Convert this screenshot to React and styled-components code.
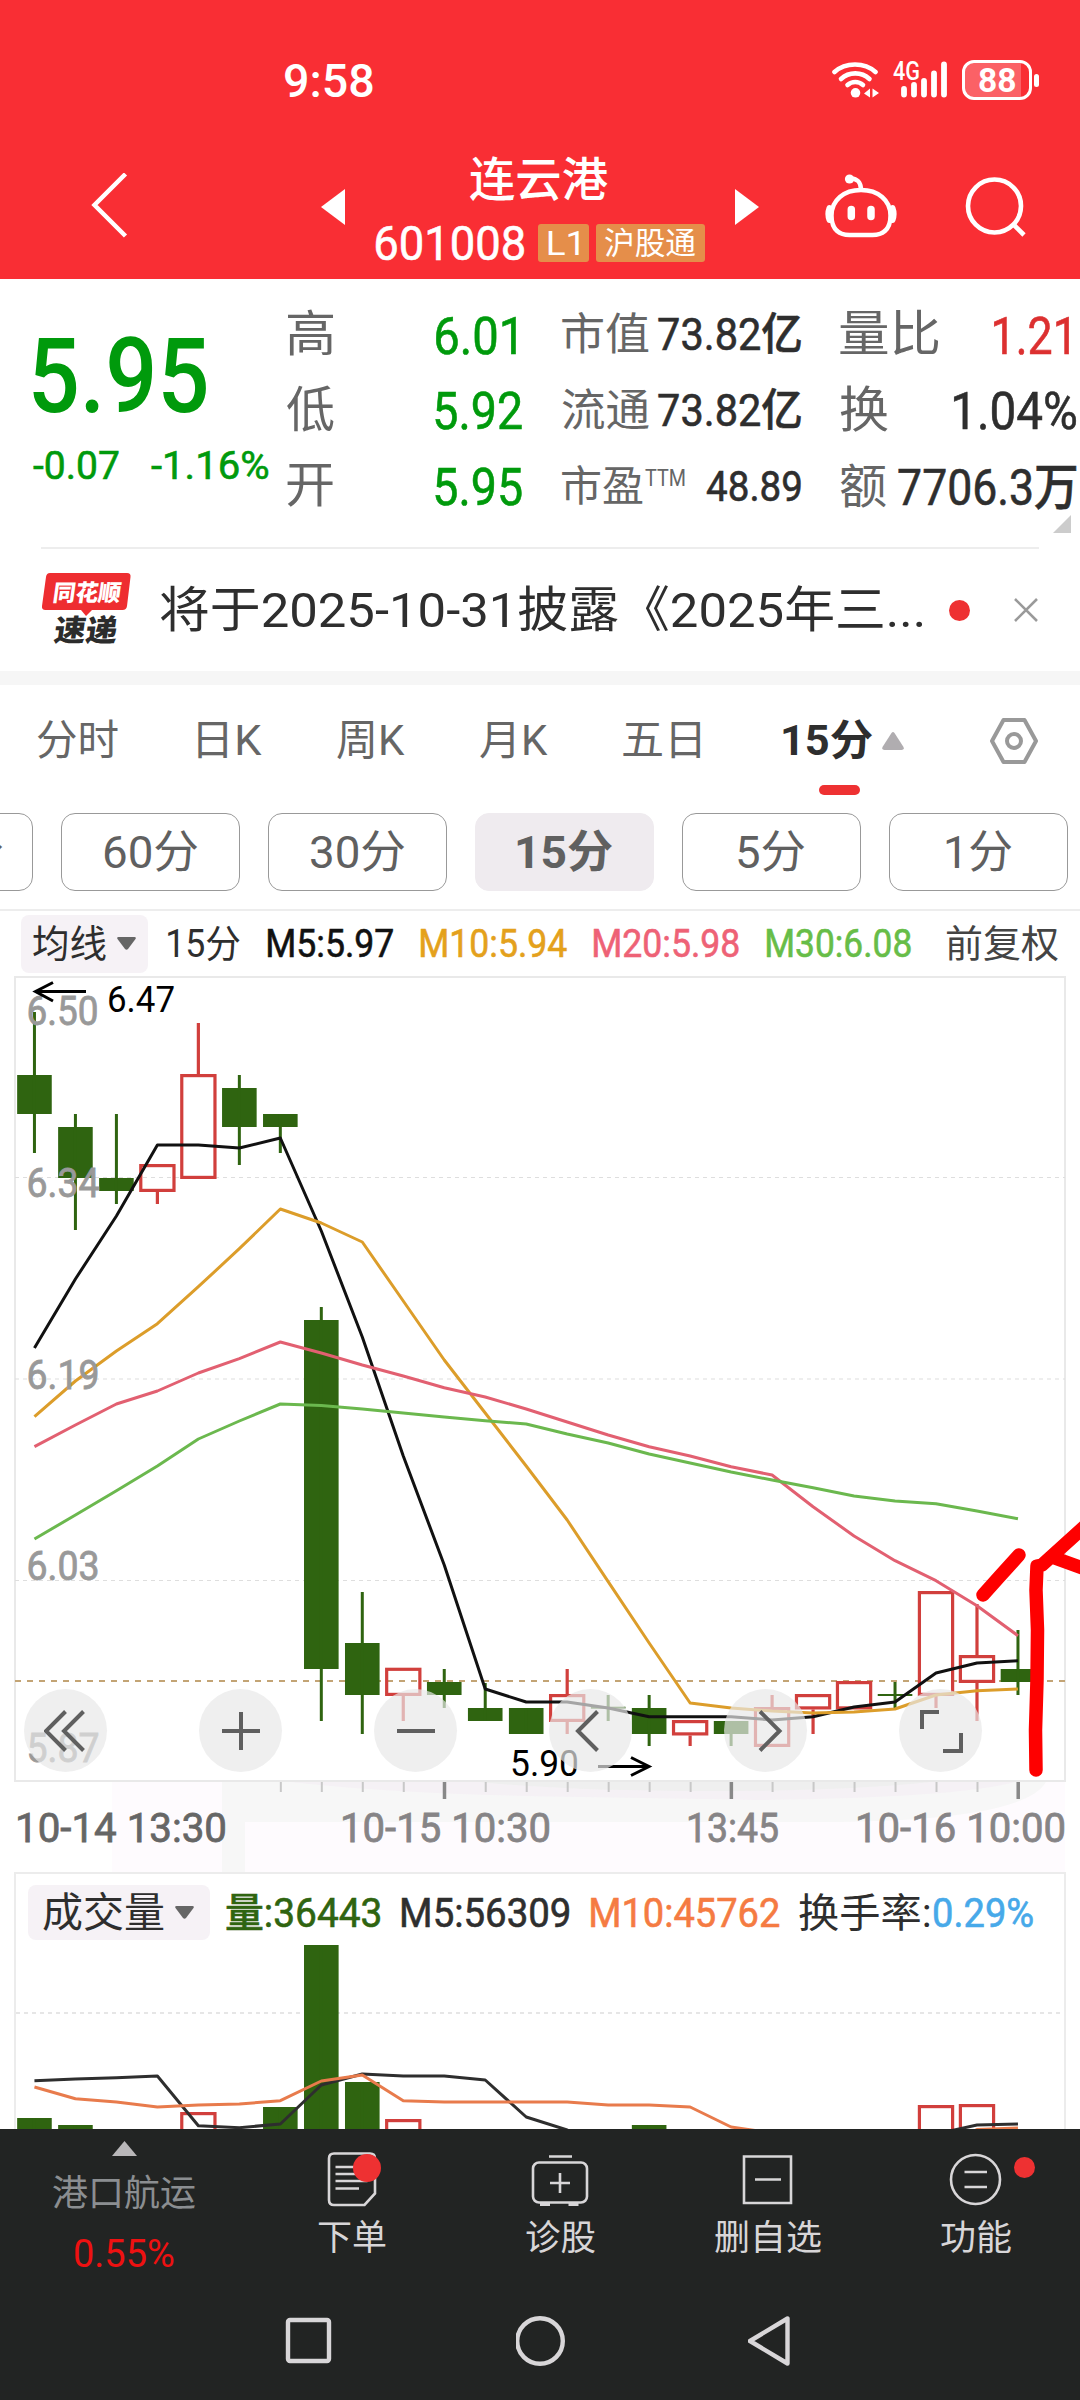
import React, { useLayoutEffect, useRef, useState } from 'react'
import styled, { createGlobalStyle, css } from 'styled-components'

const FONT = 'Roboto, "Noto Sans CJK SC", sans-serif'
const UP = '#d13f3c'
const DOWN = '#2f6410'

const GlobalStyle = createGlobalStyle`
  * { box-sizing: border-box; }
  body {
    margin: 0;
    background: #fff;
    font-family: ${FONT};
    overflow: hidden;
  }
  svg { display: block; flex: none; }
`

const Page = styled.div`
  width: 1080px;
  height: 2400px;
  display: flex;
  flex-direction: column;
  overflow: hidden;
  background: #fff;
`

/* condensed label: the glyphs are squeezed to an exact ink width */
const LabelBox = styled.span`
  display: block;
  flex: none;
  height: ${(p) => p.$size * 1.2}px;
  line-height: ${(p) => p.$size * 1.2}px;
  font-size: ${(p) => p.$size}px;
  font-weight: ${(p) => p.$weight || 400};
  color: ${(p) => p.$color || '#2e2e2e'};
  margin-left: ${(p) => p.$ml || 0}px;
  white-space: pre;
  /* half a step between regular and medium */
  ${(p) => p.$weight === 450 && css`
    -webkit-text-stroke: 0.6px currentColor;
  `}
`

const LabelInner = styled.span`
  display: inline-block;
  transform-origin: 0 50%;
`

function Label({ w, size, weight, color, ml, children }) {
  const ref = useRef(null)
  const [fit, setFit] = useState({ k: 1, dx: 0 })
  useLayoutEffect(() => {
    const ctx = document.createElement('canvas').getContext('2d')
    ctx.font = `${weight || 400} ${size}px ${FONT}`
    const m = ctx.measureText(ref.current.textContent)
    const k = w / (m.actualBoundingBoxLeft + m.actualBoundingBoxRight)
    setFit({ k, dx: m.actualBoundingBoxLeft * k })
  }, [w, size, weight, children])
  return (
    <LabelBox $size={size} $weight={weight} $color={color} $ml={ml} style={{ width: w }}>
      <LabelInner ref={ref} style={{ transform: `translate(${fit.dx}px, ${size * 0.03}px) scaleX(${fit.k})` }}>
        {children}
      </LabelInner>
    </LabelBox>
  )
}

const Gap = styled.div`
  flex: none;
  width: ${(p) => p.$w || 0}px;
  height: ${(p) => p.$h || 0}px;
`

/* ---------- header ---------- */

const Header = styled.header`
  flex: none;
  height: 279px;
  padding-top: 26px;
  background: #f92e34;
`

const StatusBar = styled.div`
  height: 108px;
  display: flex;
  align-items: center;
  padding-left: 285px;
`

const Battery = styled.div`
  width: 70px;
  height: 40px;
  margin-left: 14px;
  padding-bottom: 2px;
  display: flex;
  align-items: center;
  justify-content: center;
  border: 3px solid #fff;
  border-radius: 12px;
  background: linear-gradient(90deg, #fb6166 88%, #f92e34 88%);
`

const BatteryTip = styled.div`
  width: 5px;
  height: 13px;
  margin-left: 2px;
  border-radius: 3px;
  background: #fff;
`

const NavBar = styled.div`
  height: 145px;
  display: flex;
  align-items: center;
`

const StockTitle = styled.div`
  width: 330px;
  height: 145px;
  margin: 0 29px 0 31px;
  padding-top: 13px;
`

const TitleRow = styled.div`
  height: 64px;
  display: flex;
  align-items: center;
  padding-left: ${(p) => p.$pl || 0}px;
`

const Tag = styled.div`
  flex: none;
  width: ${(p) => p.$w}px;
  height: 38px;
  margin-left: ${(p) => p.$ml}px;
  display: flex;
  align-items: center;
  justify-content: center;
  border-radius: 3px;
  background: #e58e4a;
`

function WifiIcon() {
  return (
    <svg width="48" height="38" viewBox="832 60.5 48 38" fill="none" stroke="#fff" strokeWidth="4.6" strokeLinecap="round">
      <path d="M834.5 71.5c11-10 30-10 41 0" />
      <path d="M841 78.5c8-7.500 20.500-7.500 28.500 0" />
      <path d="M847.500 84.500c4.500-4 11-4 15.500 0" />
      <circle cx="855.500" cy="92.300" r="4.800" fill="#fff" stroke="none" />
      <path d="M870 88v9l-6-4zM872.500 88v9l6.500-4.500z" fill="#fff" stroke="none" />
    </svg>
  )
}

function SignalIcon() {
  return (
    <svg width="55" height="46" viewBox="893 56.5 55 46">
      <text x="893" y="79.500" fontFamily="Roboto" fontSize="25" fontWeight="500" fill="#fff" textLength="27" lengthAdjust="spacingAndGlyphs">4G</text>
      <g stroke="#fff" strokeWidth="5.800" strokeLinecap="round">
        <path d="M904 88.500v5.500M914 84.500v9.500M924 80.500v13.500M934 73v21M944 64v30" />
      </g>
    </svg>
  )
}

function RobotIcon() {
  return (
    <svg width="72" height="66" viewBox="825 173.500 72 66" fill="none" stroke="#fff" strokeWidth="4.500" strokeLinecap="round">
      <path d="M861 189.500c17 0 29.500 10 29.500 25.500s-9 19.500-18 19.500h-23c-9 0-18-4-18-19.500s12.500-25.500 29.500-25.500z" />
      <path d="M851 178c7 .5 9.500 3.500 10 10.500" />
      <circle cx="849.500" cy="178.500" r="4.600" fill="#fff" stroke="none" />
      <path d="M829.500 207.500c-1.500 4-1.500 8 0 12M892.500 207.500c1.500 4 1.500 8 0 12" strokeWidth="6" />
      <path d="M851.300 209v7M871 209v7" strokeWidth="7.500" />
    </svg>
  )
}

function AppHeader() {
  return (
    <Header>
      <StatusBar>
        <Label w={88} size={47} weight={500} color="#fff">9:58</Label>
        <Gap $w={459} />
        <WifiIcon />
        <Gap $w={13} />
        <SignalIcon />
        <Battery>
          <Label w={36} size={34} weight={700} color="#fff">88</Label>
        </Battery>
        <BatteryTip />
      </StatusBar>
      <NavBar>
        <Gap $w={88} />
        <svg width="42" height="68" viewBox="88 172.500 42 68" fill="none" stroke="#fff" strokeWidth="4.500">
          <path d="M125.500 173.500l-31 31 31 31" />
        </svg>
        <Gap $w={191} />
        <svg width="24" height="36" viewBox="0 0 24 36" fill="#fff"><path d="M24 0v36L0 18z" /></svg>
        <StockTitle>
          <TitleRow $pl={94}>
            <Label w={138} size={47} weight={500} color="#fff">连云港</Label>
          </TitleRow>
          <TitleRow>
            <Label w={148} size={49} weight={450} color="#fff">601008</Label>
            <Tag $w={51} $ml={14}><Label w={31} size={33} color="#fff">L1</Label></Tag>
            <Tag $w={109} $ml={7}><Label w={91} size={31} color="#fff">沪股通</Label></Tag>
          </TitleRow>
        </StockTitle>
        <svg width="24" height="36" viewBox="0 0 24 36" fill="#fff"><path d="M0 0v36L24 18z" /></svg>
        <Gap $w={66} />
        <RobotIcon />
        <Gap $w={67} />
        <svg width="64" height="64" viewBox="964 174.500 64 64" fill="none" stroke="#fff" strokeWidth="4.600">
          <circle cx="994.500" cy="205.500" r="26.500" />
          <path d="M1013.500 224l10.500 10.500" />
        </svg>
      </NavBar>
    </Header>
  )
}

/* ---------- quote ---------- */

const Quote = styled.section`
  position: relative;
  flex: none;
  height: 268px;
  padding-top: 18px;
  display: flex;
`

const PriceBlock = styled.div`
  width: 287px;
  padding: 15px 0 0 33px;
`

const Changes = styled.div`
  display: flex;
  margin-top: 5px;
`

const StatCol = styled.div`
  width: ${(p) => p.$w}px;
  margin-right: ${(p) => p.$mr || 0}px;
`

const StatRow = styled.div`
  height: 75.5px;
  display: flex;
  align-items: center;
  justify-content: space-between;
`

const StatName = styled.div`
  display: flex;
  align-items: center;
`

const StatValue = styled(StatName)`
  padding-right: ${(p) => p.$pr}px;
`

const Superscript = styled.div`
  height: 44px;
`

const Corner = styled.i`
  position: absolute;
  right: 9px;
  bottom: 14px;
  border: 9px solid transparent;
  border-right-color: #ccc;
  border-bottom-color: #ccc;
`

const Divider = styled.div`
  flex: none;
  height: 2px;
  margin: 0 ${(p) => p.$m || 0}px;
  background: #ededed;
`

const GREEN = '#009a0c'
const GREY = '#666'

function QuotePanel() {
  return (
    <Quote>
      <PriceBlock>
        <Label w={173} size={104} weight={500} color={GREEN}>5.95</Label>
        <Changes>
          <Label w={86} size={39} weight={450} color={GREEN}>-0.07</Label>
          <Label w={117} size={39} weight={450} color={GREEN} ml={32}>-1.16%</Label>
        </Changes>
      </PriceBlock>
      <StatCol $w={235} $mr={40}>
        <StatRow>
          <Label w={46} size={49} color={GREY}>高</Label>
          <StatValue $pr={6}>
            <Label w={80} size={52} weight={450} color={GREEN}>6.01</Label>
          </StatValue>
        </StatRow>
        <StatRow>
          <Label w={47} size={49} color={GREY}>低</Label>
          <Label w={87} size={52} weight={450} color={GREEN}>5.92</Label>
        </StatRow>
        <StatRow>
          <Label w={46} size={49} color={GREY}>开</Label>
          <Label w={87} size={52} weight={450} color={GREEN}>5.95</Label>
        </StatRow>
      </StatCol>
      <StatCol $w={239} $mr={39}>
        <StatRow>
          <Label w={87} size={44} color={GREY}>市值</Label>
          <Label w={143} size={44} weight={450}>73.82亿</Label>
        </StatRow>
        <StatRow>
          <Label w={87} size={44} color={GREY}>流通</Label>
          <Label w={143} size={44} weight={450}>73.82亿</Label>
        </StatRow>
        <StatRow>
          <StatName>
            <Label w={81} size={42} color={GREY}>市盈</Label>
            <Superscript>
              <Label w={40} size={23} color={GREY} ml={2}>TTM</Label>
            </Superscript>
          </StatName>
          <Label w={94} size={43} weight={450}>48.89</Label>
        </StatRow>
      </StatCol>
      <StatCol $w={236}>
        <StatRow>
          <Label w={99} size={49} color={GREY}>量比</Label>
          <StatValue $pr={7}>
            <Label w={75} size={52} weight={450} color="#dc3030">1.21</Label>
          </StatValue>
        </StatRow>
        <StatRow>
          <Label w={48} size={49} color={GREY}>换</Label>
          <Label w={122} size={52} weight={450}>1.04%</Label>
        </StatRow>
        <StatRow>
          <Label w={46} size={47} color={GREY}>额</Label>
          <Label w={178} size={50} weight={450}>7706.3万</Label>
        </StatRow>
      </StatCol>
      <Corner />
    </Quote>
  )
}

/* ---------- news ---------- */

const News = styled.section`
  flex: none;
  height: 122px;
  display: flex;
  align-items: center;
  padding-left: 40px;
`

const Dot = styled.i`
  flex: none;
  width: ${(p) => p.$d}px;
  height: ${(p) => p.$d}px;
  border-radius: 50%;
  background: #ee3132;
`

const Band = styled.div`
  flex: none;
  height: 14px;
  background: #f6f6f6;
`

function NewsRow() {
  return (
    <News>
      <svg width="92" height="86" viewBox="40 567 92 86" fontFamily='"Noto Sans CJK SC"' fontWeight="900">
        <path d="M50 573h77q4 0 3.500 4l-3.500 29q-.5 4-4.500 4H92l-6 6-5-6H45.500q-4 0-3.500-4l4-29q.5-4 4-4z" fill="#ee2d30" />
        <text x="0" y="0" fontSize="23" fill="#fff" textLength="68" lengthAdjust="spacingAndGlyphs" transform="translate(52 600.500) skewX(-8)">同花顺</text>
        <text x="0" y="0" fontSize="30" fill="#2c2c2c" textLength="63" lengthAdjust="spacingAndGlyphs" transform="translate(53 641) skewX(-8)">速递</text>
      </svg>
      <Label w={762} size={49} ml={28}>将于2025-10-31披露《2025年三...</Label>
      <Gap $w={27} />
      <Dot $d={21} />
      <Gap $w={43} />
      <svg width="26" height="26" viewBox="0 0 26 26" stroke="#9a9a9a" strokeWidth="2.600"><path d="M2 2l22 22M24 2L2 24" /></svg>
    </News>
  )
}

/* ---------- period tabs ---------- */

const Tabs = styled.nav`
  flex: none;
  position: relative;
  height: 128px;
  padding-bottom: 17px;
  display: flex;
  align-items: center;
`

const Underline = styled.i`
  position: absolute;
  left: 819px;
  top: 100px;
  width: 41px;
  height: 10px;
  border-radius: 5px;
  background: #ee3132;
`

const Chips = styled.div`
  flex: none;
  height: 96px;
  display: flex;
  gap: 28px;
  margin-left: -146px;
`

const Chip = styled.div`
  flex: none;
  width: 179px;
  height: 78px;
  display: flex;
  align-items: center;
  justify-content: center;
  border: 1.5px solid #999;
  border-radius: 14px;
  ${(p) => p.$active && css`
    border-color: #efebef;
    background: #efebef;
  `}
`

const periods = [
  { text: '120分', w: 118 },
  { text: '60分', w: 94 },
  { text: '30分', w: 94 },
  { text: '15分', w: 95, active: true },
  { text: '5分', w: 67 },
  { text: '1分', w: 66 },
]

function PeriodTabs() {
  return (
    <>
      <Tabs>
        <Label w={81} size={42} color={GREY} ml={37}>分时</Label>
        <Label w={64} size={42} color={GREY} ml={80}>日K</Label>
        <Label w={68} size={42} color={GREY} ml={75}>周K</Label>
        <Label w={68} size={42} color={GREY} ml={75}>月K</Label>
        <Label w={77} size={42} color={GREY} ml={75}>五日</Label>
        <Label w={89} size={42} weight={700} ml={83}>15分</Label>
        <Gap $w={10} />
        <svg width="22" height="18" viewBox="0 0 22 18"><path d="M9.500 1q1.500-2 3 0l9 14q1 3-2 3H2.500q-3 0-2-3z" fill="#b0adb0" /></svg>
        <Gap $w={85} />
        <svg width="50" height="48" viewBox="0 0 50 48" fill="none" stroke="#999" strokeWidth="4" strokeLinejoin="round">
          <path d="M14.500 3h21L47 24 35.500 45h-21L3 24z" />
          <circle cx="25" cy="24" r="7" />
        </svg>
        <Underline />
      </Tabs>
      <Chips>
        {periods.map((p) => (
          <Chip key={p.text} $active={p.active}>
            <Label w={p.w} size={45} weight={p.active ? 700 : 400} color="#606060">{p.text}</Label>
          </Chip>
        ))}
      </Chips>
    </>
  )
}

/* ---------- charts ---------- */

const Legend = styled.div`
  flex: none;
  height: 65px;
  display: flex;
  align-items: center;
`

const Picker = styled.div`
  flex: none;
  width: ${(p) => p.$w}px;
  height: ${(p) => p.$h}px;
  margin-left: ${(p) => p.$ml}px;
  display: flex;
  align-items: center;
  border-radius: 8px;
  background: #f6f2f6;
`

const Caret = () => (
  <svg width="19" height="13" viewBox="0 0 19 13"><path d="M1.500 0h16q2 0 1 2l-7.500 10q-1.500 1.500-3 0L.5 2q-1-2 1-2z" fill="#666" /></svg>
)

const PriceChart = styled.div`
  position: relative;
  flex: none;
  height: 896px;
`

const ChartTools = styled.div`
  position: absolute;
  left: 24px;
  top: 713px;
  display: flex;
  gap: 92px;
`

const RoundButton = styled.button`
  width: 83px;
  height: 83px;
  padding: 0;
  border: 0;
  border-radius: 50%;
  display: flex;
  align-items: center;
  justify-content: center;
  background: rgba(232, 232, 232, 0.69);
`

const cx = (i) => 34.45 + 40.98 * i

// [up, bodyTop, bodyBottom, wickTop, wickBottom]
const candles = [
  [0, 1075, 1114, 1012, 1153],
  [0, 1127, 1178, 1114, 1230],
  [0, 1178, 1191, 1114, 1204],
  [1, 1164, 1192, 1164, 1204],
  [1, 1074, 1179, 1023, 1179],
  [0, 1088, 1127, 1075, 1165],
  [0, 1114, 1127, 1114, 1153],
  [0, 1320, 1669, 1307, 1721],
  [0, 1643, 1695, 1592, 1734],
  [1, 1667.7, 1696, 1668, 1721],
  [0, 1682, 1695, 1669, 1708],
  [0, 1708, 1721, 1683, 1721],
  [0, 1708, 1734, 1708, 1734],
  [1, 1694, 1722, 1669, 1734],
  [0, 1706.7, 1708.7, 1695, 1721],
  [0, 1708, 1734, 1695, 1746],
  [1, 1720, 1735.5, 1720, 1746],
  [0, 1721, 1734, 1721, 1746],
  [1, 1707, 1747, 1695, 1747],
  [1, 1694, 1709.5, 1694, 1734],
  [1, 1681, 1709.5, 1681, 1709],
  [0, 1694, 1696, 1682, 1708],
  [1, 1591, 1696, 1591, 1708],
  [1, 1655, 1683, 1604, 1721],
  [0, 1669, 1682, 1630, 1695],
]

const ma5 = [1348, 1279, 1216, 1145, 1145, 1148, 1138, 1231, 1337, 1456, 1565, 1689, 1702, 1702, 1708, 1716.7, 1716.7, 1716.7, 1720, 1716.7, 1707, 1702, 1673, 1663, 1660.7]
const ma10 = [1416.7, 1381, 1351, 1323.7, 1286.7, 1248.7, 1209, 1223, 1242, 1301, 1360, 1413, 1466, 1520, 1581.7, 1643, 1703, 1708, 1711, 1713, 1712, 1709, 1695, 1690.7, 1689]
const ma20 = [1446.7, 1425, 1404, 1391, 1373, 1358.7, 1342, 1353, 1365, 1376, 1387.7, 1397, 1409, 1422, 1435, 1446.7, 1456, 1466.7, 1475, 1506.7, 1536, 1560.7, 1580.7, 1605.7, 1635.7]
const ma30 = [1539, 1515, 1490.7, 1466, 1439, 1421, 1404, 1405.5, 1409, 1413, 1417, 1420.7, 1424, 1434, 1443, 1454, 1463, 1472, 1480, 1487.7, 1496, 1501, 1503.7, 1511, 1518.7]

const volumes = [[0, 0, 2118], [1, 0, 2125], [4, 1, 2112], [6, 0, 2107], [7, 0, 1945], [8, 0, 2082], [9, 1, 2119], [15, 0, 2125], [22, 1, 2105], [23, 1, 2104]]
const vol5 = [2080.7, 2079, 2077.7, 2076, 2125.7, 2127.7, 2124, 2085, 2074, 2076, 2076, 2080, 2117, 2130, 2150, 2150, 2150, 2150, 2150, 2150, 2150, 2150, 2134, 2125, 2124]
const vol10 = [2087, 2098.7, 2102, 2107, 2105, 2104, 2100.7, 2081, 2075, 2100.7, 2102, 2102, 2102, 2102, 2105, 2105, 2107, 2127, 2133, 2150, 2150, 2150, 2150, 2129.5, 2128]

const Line = ({ data, color }) => (
  <polyline points={data.map((y, i) => `${cx(i)},${y}`).join(' ')} fill="none" stroke={color} strokeWidth="3" strokeLinejoin="round" />
)

const Candle = ({ x, up, top, bottom, high, low }) => {
  if (!up) {
    return (
      <g fill={DOWN}>
        <rect x={x - 17.3} y={top} width="34.6" height={bottom - top} />
        <rect x={x - 1.5} y={high} width="3" height={low - high} />
      </g>
    )
  }
  return (
    <g stroke={UP} strokeWidth="3.2" fill="none">
      {high < top && <path d={`M${x} ${high}V${top}`} />}
      {low > bottom && <path d={`M${x} ${bottom}V${low}`} />}
      <rect x={x - 16.6} y={top + 1.6} width="33.2" height={bottom - top - 3.2} />
    </g>
  )
}

const ChartText = ({ x, y, w, color, size = 40, bold = 0.8, children }) => (
  <text x={x} y={y} fill={color} stroke={color} strokeWidth={bold} fontSize={size} textLength={w} lengthAdjust="spacingAndGlyphs">{children}</text>
)

function PriceSvg() {
  return (
    <svg width="1080" height="896" viewBox="0 976 1080 896" fontFamily="Roboto">
      <path d="M112 1782H1065V1872H112z" fill="#fefbfe" />
      <path d="M222 1782H1046q-22 38-210 40H245v50h-23z" fill="#f7f7f7" />
      <path d="M290 1782H1015q-60 16-260 18c-180-4-320-2-465-18z" fill="#f5f1f5" />
      <path d="M480 1782H930q-80 9-220 9t-230-9z" fill="#efefef" />
      <rect x="15" y="977" width="1050" height="804" fill="#fff" stroke="#e9e9e9" strokeWidth="2" />
      <g stroke="#dedede" strokeWidth="1.2" strokeDasharray="4 4">
        <path d="M15 1177.500H1065M15 1379H1065M15 1580.500H1065" />
      </g>
      <path d="M15 1681H1065" stroke="#c3a475" strokeWidth="1.8" strokeDasharray="6 6" />
      {candles.map(([up, top, bottom, high, low], i) => (
        <Candle key={i} x={cx(i)} up={up} top={top} bottom={bottom} high={high} low={low} />
      ))}
      <Line data={ma5} color="#111" />
      <Line data={ma10} color="#dc9d2a" />
      <Line data={ma20} color="#e26071" />
      <Line data={ma30} color="#6bb84e" />
      <ChartText x={26.5} y={1025} w={72} color="#999">6.50</ChartText>
      <ChartText x={26.5} y={1197} w={73} color="#999">6.34</ChartText>
      <ChartText x={26.5} y={1389} w={73} color="#999">6.19</ChartText>
      <ChartText x={26.5} y={1580} w={73} color="#999">6.03</ChartText>
      <ChartText x={26.5} y={1762} w={73} color="#999">5.87</ChartText>
      <g fill="none" stroke="#000" strokeWidth="3">
        <path d="M86 991.500H35M53 982.500L35.500 991.500 53 1001" />
        <path d="M598 1766.500H649M631 1757.500L649 1766.500 631 1775.500" />
      </g>
      <ChartText x={107} y={1012} w={68} size={36} bold={0} color="#000">6.47</ChartText>
      <ChartText x={510} y={1776} w={69} size={36} bold={0} color="#000">5.90</ChartText>
      {Array.from({ length: 19 }, (_, k) => k + 6).map((i) => {
        const major = i % 7 === 3
        return <rect key={i} x={cx(i) + 0.5 - (major ? 2 : 1)} y="1782" width={major ? 3.5 : 2} height={major ? 17 : 10} fill={major ? '#888' : '#c8c8c8'} />
      })}
      <ChartText x={15} y={1842} w={212} size={41} color="#666">10-14 13:30</ChartText>
      <ChartText x={340} y={1842} w={211} size={41} color="#868486">10-15 10:30</ChartText>
      <ChartText x={686} y={1842} w={93} size={41} color="#868486">13:45</ChartText>
      <ChartText x={855} y={1842} w={211} size={41} color="#868486">10-16 10:00</ChartText>
    </svg>
  )
}

/* freehand pen marks over the chart */
const Ink = styled.svg`
  position: absolute;
  left: 0;
  top: 0;
  pointer-events: none;
`

function Tools() {
  const icons = [
    'M21.500 2.500L2 22l19.500 19.500M39.500 2.500L20 22l19.500 19.500',
    'M22 3v38M3 22h38',
    'M3 22h38',
    'M28.500 2.500L9 22l19.500 19.500',
    'M16 2.500L35.500 22 16 41.500',
    'M3 20V3h17M42 24v18H24',
  ]
  return (
    <ChartTools>
      {icons.map((d) => (
        <RoundButton key={d}>
          <svg width="44" height="44" viewBox="0 0 44 44" fill="none" stroke="#5f5f5f" strokeWidth="4"><path d={d} /></svg>
        </RoundButton>
      ))}
    </ChartTools>
  )
}

const VolumePanel = styled.section`
  flex: none;
  height: 257px;
  margin: 0 14px;
  border: 2px solid #ececec;
  border-bottom: 0;
`

const VolumeLegend = styled.div`
  height: 55px;
  margin-top: 11px;
  display: flex;
  align-items: center;
`

function Charts() {
  return (
    <>
      <Legend>
        <Picker $w={127} $h={58} $ml={21}>
          <Label w={73} size={38} ml={12}>均线</Label>
          <Gap $w={11} />
          <Caret />
        </Picker>
        <Label w={72} size={38} ml={20}>15分</Label>
        <Label w={125} size={38} weight={450} color="#111" ml={28}>M5:5.97</Label>
        <Label w={146} size={38} weight={450} color="#e4a11c" ml={28}>M10:5.94</Label>
        <Label w={145} size={38} weight={450} color="#ee6276" ml={27}>M20:5.98</Label>
        <Label w={144} size={38} weight={450} color="#67bd48" ml={28}>M30:6.08</Label>
        <Label w={111} size={38} color="#444" ml={36}>前复权</Label>
      </Legend>
      <PriceChart>
        <PriceSvg />
        <Tools />
        <Ink width="1080" height="896" viewBox="0 976 1080 896" fill="none" stroke="#fe0000" strokeWidth="13.5" strokeLinecap="round" strokeLinejoin="round">
          <path d="M983 1595l17-19 19-21" />
          <path d="M1036 1770l-.5-40 1.500-50 .5-50-1.500-40 1-24 5-1 42-38M1052 1557l36 13" />
        </Ink>
      </PriceChart>
      <VolumePanel>
        <VolumeLegend>
          <Picker $w={182} $h={55} $ml={12}>
            <Label w={121} size={41} ml={15}>成交量</Label>
            <Gap $w={11} />
            <Caret />
          </Picker>
          <Label w={154} size={40} weight={450} color={DOWN} ml={16}>量:36443</Label>
          <Label w={167} size={40} weight={450} ml={22}>M5:56309</Label>
          <Label w={188} size={40} weight={450} color="#f57b42" ml={22}>M10:45762</Label>
          <Label w={131} size={40} ml={20}>换手率:</Label>
          <Label w={99} size={40} weight={450} color="#47a9e9" ml={4}>0.29%</Label>
        </VolumeLegend>
        <svg width="1048" height="189" viewBox="16 1940 1048 189">
          <path d="M16 2013H1064" stroke="#e6e6e6" strokeWidth="2" strokeDasharray="4 4" />
          {volumes.map(([i, up, top]) => (
            <Candle key={i} x={cx(i)} up={up} top={top} bottom={2160} high={top} low={2160} />
          ))}
          <Line data={vol5} color="#2e2e2e" />
          <Line data={vol10} color="#e87b4c" />
        </svg>
      </VolumePanel>
    </>
  )
}

/* ---------- bottom ---------- */

const Bottom = styled.footer`
  flex: none;
  height: 271px;
  background: #222423;
`

const Actions = styled.div`
  height: 150px;
  display: flex;
`

const Sector = styled.div`
  width: 248px;
  padding-top: 12px;
  display: flex;
  flex-direction: column;
  align-items: center;
`

const Action = styled.div`
  position: relative;
  width: 208px;
  padding-top: 22px;
  display: flex;
  flex-direction: column;
  align-items: center;
  gap: 8px;
`

const Badge = styled(Dot)`
  position: absolute;
  left: ${(p) => p.$x}px;
  top: ${(p) => p.$y}px;
`

const SystemNav = styled.div`
  height: 121px;
  display: flex;
  align-items: center;
  padding: 3px 0 0 284px;
  gap: 182px;
`

const ActionIcon = ({ children }) => (
  <svg width="60" height="58" viewBox="0 0 60 58" fill="none" stroke="#d8d6d8" strokeWidth="2.6">{children}</svg>
)

function BottomBar() {
  return (
    <Bottom>
      <Actions>
        <Sector>
          <svg width="25" height="15" viewBox="0 0 25 15" fill="#b9b7b9"><path d="M12.500 0L25 15H0z" /></svg>
          <Gap $h={16} />
          <Label w={142} size={36} color="#8b8e91">港口航运</Label>
          <Gap $h={16} />
          <Label w={99} size={38} color="#ee1111">0.55%</Label>
        </Sector>
        <Action>
          <ActionIcon>
            <path d="M12 2.500h36q5 0 5 5v35L42.500 54H12q-5 0-5-5V7.500q0-5 5-5z" />
            <path d="M13.500 16h24M13.500 23h32M13.500 30h32M13.500 37.500h23.500" />
          </ActionIcon>
          <Label w={68} size={35} color="#d8d6d8">下单</Label>
          <Badge $d={28} $x={105} $y={25} />
        </Action>
        <Action>
          <ActionIcon>
            <rect x="3" y="11.5" width="54" height="40" rx="6" />
            <path d="M19 5.500h23M30 22v20M20 32h20" />
            <path d="M10 53h10M38.500 53h10" strokeWidth="4" />
          </ActionIcon>
          <Label w={69} size={35} color="#d8d6d8">诊股</Label>
        </Action>
        <Action>
          <ActionIcon>
            <path d="M6 5.500h47v46.500H6zM17 28.500h26" />
          </ActionIcon>
          <Label w={106} size={35} color="#d8d6d8">删自选</Label>
        </Action>
        <Action>
          <ActionIcon>
            <circle cx="29.5" cy="28.5" r="24.5" />
            <path d="M18.500 21h22.500M18.500 36h22.500" />
          </ActionIcon>
          <Label w={70} size={35} color="#d8d6d8">功能</Label>
          <Badge $d={21} $x={142} $y={28} />
        </Action>
      </Actions>
      <SystemNav>
        <svg width="50" height="50" viewBox="0 0 50 50" fill="none" stroke="#d8d6d8" strokeWidth="4.4"><rect x="4" y="4" width="41" height="41" rx="2" /></svg>
        <svg width="50" height="50" viewBox="0 0 50 50" fill="none" stroke="#d8d6d8" strokeWidth="4.4"><circle cx="24" cy="25" r="22.8" /></svg>
        <svg width="50" height="50" viewBox="0 0 50 50" fill="none" stroke="#d8d6d8" strokeWidth="4.4" strokeLinejoin="round"><path d="M39.500 2.500v45L2 25z" /></svg>
      </SystemNav>
    </Bottom>
  )
}

export default function App() {
  return (
    <Page>
      <GlobalStyle />
      <AppHeader />
      <QuotePanel />
      <Divider $m={41} />
      <NewsRow />
      <Band />
      <PeriodTabs />
      <Divider />
      <Charts />
      <BottomBar />
    </Page>
  )
}
